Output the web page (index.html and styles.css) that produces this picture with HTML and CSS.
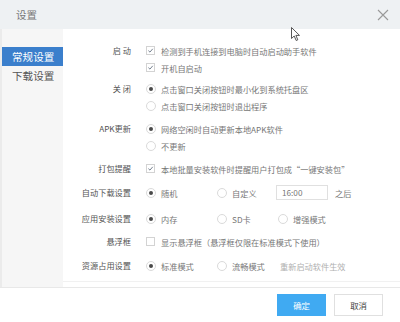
FILE: index.html
```html
<!DOCTYPE html>
<html lang="zh">
<head>
<meta charset="utf-8">
<title>设置</title>
<link rel="stylesheet" href="styles.css">
</head>
<body>
<div class="window">
  <header class="titlebar">
    <span class="title">设置</span>
    <svg class="close" width="12" height="12" viewBox="0 0 12 12"><path d="M1 1 L11 11 M11 1 L1 11" stroke="#999" stroke-width="1.1" fill="none"/></svg>
  </header>
  <div class="main">
    <nav class="sidebar">
      <div class="nav-item active">常规设置</div>
      <div class="nav-item">下载设置</div>
    </nav>
    <section class="content">
      <div class="inner">
        <div class="group">
          <div class="label">启 动</div>
          <div class="opts">
            <div class="line"><span class="cb"><svg viewBox="0 0 10 10"><path d="M2 5.2 L4.2 7.3 L8.2 2.6" /></svg></span>检测到手机连接到电脑时自动启动助手软件</div>
            <div class="line"><span class="cb"><svg viewBox="0 0 10 10"><path d="M2 5.2 L4.2 7.3 L8.2 2.6" /></svg></span>开机自启动</div>
          </div>
        </div>
        <div class="group gap-s">
          <div class="label">关 闭</div>
          <div class="opts">
            <div class="line"><span class="rd on"></span>点击窗口关闭按钮时最小化到系统托盘区</div>
            <div class="line"><span class="rd"></span>点击窗口关闭按钮时退出程序</div>
          </div>
        </div>
        <div class="group gap-m">
          <div class="label">APK更新</div>
          <div class="opts">
            <div class="line"><span class="rd on"></span>网络空闲时自动更新本地APK软件</div>
            <div class="line"><span class="rd"></span>不更新</div>
          </div>
        </div>
        <div class="group gap-m">
          <div class="label">打包提醒</div>
          <div class="opts">
            <div class="line"><span class="cb"><svg viewBox="0 0 10 10"><path d="M2 5.2 L4.2 7.3 L8.2 2.6" /></svg></span>本地批量安装软件时提醒用户打包成“一键安装包”</div>
          </div>
        </div>
        <div class="group gap-l">
          <div class="label">自动下载设置</div>
          <div class="opts">
            <div class="line cols">
              <span class="opt"><span class="rd on"></span>随机</span>
              <span class="opt"><span class="rd"></span>自定义</span>
              <span class="opt time"><span class="input">16:00</span><span class="after">之后</span></span>
            </div>
          </div>
        </div>
        <div class="group gap-xl">
          <div class="label">应用安装设置</div>
          <div class="opts">
            <div class="line cols">
              <span class="opt"><span class="rd on"></span>内存</span>
              <span class="opt"><span class="rd"></span>SD卡</span>
              <span class="opt"><span class="rd"></span>增强模式</span>
            </div>
          </div>
        </div>
        <div class="group gap-m">
          <div class="label">悬浮框</div>
          <div class="opts">
            <div class="line"><span class="cb off"></span>显示悬浮框（悬浮框仅限在标准模式下使用）</div>
          </div>
        </div>
        <div class="group gap-l">
          <div class="label">资源占用设置</div>
          <div class="opts">
            <div class="line cols">
              <span class="opt"><span class="rd on"></span>标准模式</span>
              <span class="opt"><span class="rd"></span>流畅模式</span>
              <span class="opt hint">重新启动软件生效</span>
            </div>
          </div>
        </div>
      </div>
    </section>
  </div>
  <footer class="footer">
    <button class="btn primary">确定</button>
    <button class="btn">取消</button>
  </footer>
  <svg class="cursor" width="10" height="15" viewBox="0 0 10 15"><path d="M0.5 0.5 L0.5 11.5 L3.2 9 L5.2 13.5 L6.8 12.8 L4.9 8.4 L8.5 8.4 Z" fill="#fff" stroke="#444" stroke-width="0.9" stroke-linejoin="round"/></svg>
</div>
</body>
</html>
```

FILE: styles.css
```css
* { box-sizing: border-box; }
html, body { margin: 0; padding: 0; background: #fff; }
body {
  font-family: "Noto Sans CJK SC", "Noto Sans", sans-serif;
  font-size: 8.2px;
  color: #777;
}
.window {
  position: relative;
  width: 400px;
  height: 322px;
  display: flex;
  flex-direction: column;
  overflow: hidden;
}
.titlebar {
  height: 29px;
  background: #eef1f3;
  display: flex;
  align-items: center;
  justify-content: space-between;
  padding: 0 11px 0 16px;
}
.title { font-size: 10.5px; color: #777; }
.close { display: block; }
.main {
  height: 258px;
  display: flex;
}
.sidebar {
  width: 63px;
  background: #f6f6f6;
  border-left: 2px solid #ebebeb;
  padding-top: 18px;
}
.nav-item {
  height: 19px;
  line-height: 19px;
  font-size: 10.6px;
  color: #555;
  padding-left: 10px;
}
.nav-item.active { background: #3b7fcc; color: #fff; }
.content {
  flex: 1;
  height: 258px;
}
.inner {
  height: 253px;
  border-bottom: 1px solid #f1f1f1;
  padding-top: 13px;
}
.group { display: flex; }
.group + .group { margin-top: 6px; }
.group.gap-s { margin-top: 4px; }
.group.gap-m { margin-top: 6px; }
.group.gap-l { margin-top: 7px; }
.group.gap-xl { margin-top: 9px; }
.label {
  width: 68px;
  text-align: right;
  line-height: 17px;
  color: #555;
  white-space: nowrap;
}
.opts { margin-left: 15px; }
.line {
  display: flex;
  align-items: center;
  height: 17px;
  white-space: nowrap;
}
.cols { display: grid; grid-template-columns: 71px 61px auto; align-items: center; }
.opt { display: flex; align-items: center; }
.cb {
  width: 9px;
  height: 9px;
  border: 1px solid #d3d3d3;
  background: #fff;
  margin-right: 6px;
  display: flex;
  flex-shrink: 0;
}
.cb svg { width: 100%; height: 100%; }
.cb path { fill: none; stroke: #5a6878; stroke-width: 1.2; }
.rd {
  width: 10px;
  height: 10px;
  border: 1px solid #dadada;
  border-radius: 50%;
  background: #fff;
  margin-right: 5px;
  flex-shrink: 0;
  display: flex;
  align-items: center;
  justify-content: center;
}
.rd.on::after {
  content: "";
  width: 4px;
  height: 4px;
  border-radius: 50%;
  background: #4a4a4a;
}
.time { margin-left: -2px; }
.input {
  width: 52px;
  height: 15px;
  border: 1px solid #e0e0e0;
  line-height: 13px;
  padding-left: 5px;
  color: #777;
}
.after { margin-left: 7px; }
.hint { color: #b0b0b0; margin-left: 2px; }
.footer {
  flex: 1;
  border-top: 1px solid #e8e8e8;
  display: flex;
  justify-content: flex-end;
  gap: 8px;
  padding: 6px 17px 0 0;
}
.btn {
  width: 49px;
  height: 22px;
  font-family: inherit;
  font-size: 8.4px;
  border: 1px solid #e0e0e0;
  background: #fff;
  color: #444;
  padding: 0;
}
.btn.primary { background: #40aaf2; border-color: #40aaf2; color: #fff; }
.cursor { position: absolute; left: 291px; top: 27px; }
```
